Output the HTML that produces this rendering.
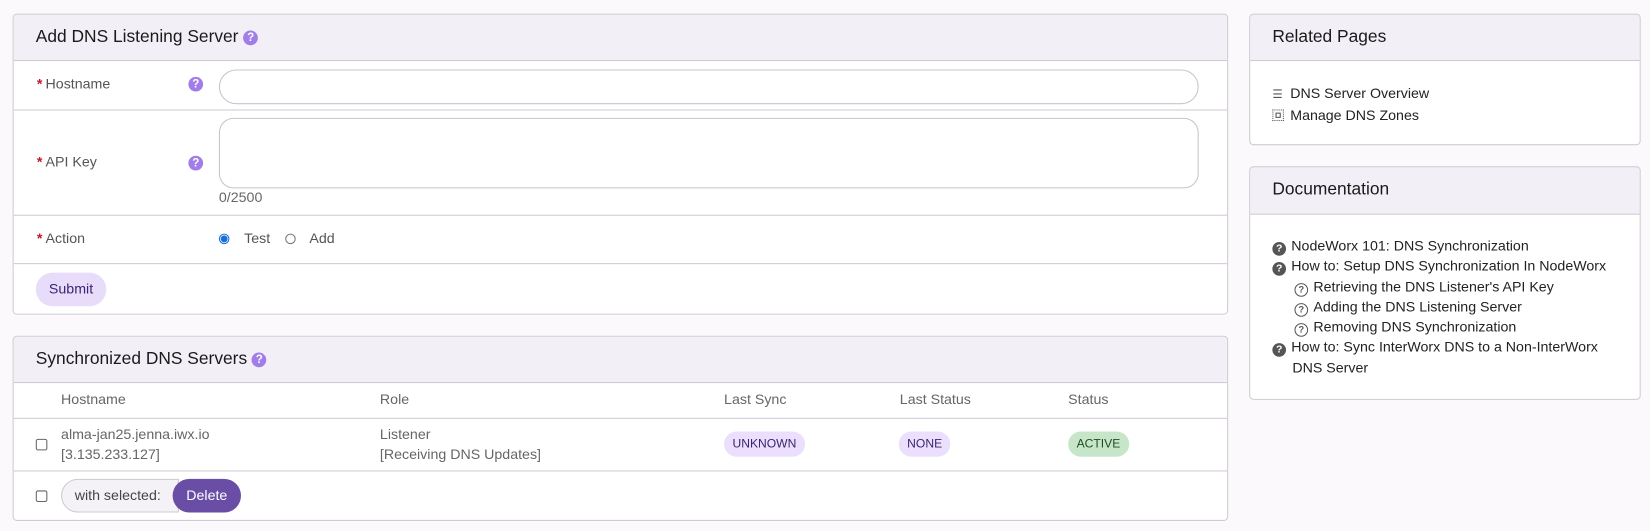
<!DOCTYPE html>
<html><head><meta charset="utf-8"><style>
*{box-sizing:border-box;margin:0;padding:0}
html,body{width:1650px;height:531px;overflow:hidden;background:#fcf9fc}
#w{width:1568px;height:505px;position:relative;transform:scale(1.0524);transform-origin:0 0;font-family:"Liberation Sans",sans-serif;font-size:13.5px;color:#222}
.p{position:absolute;background:#fff;border:1px solid #cfcbd2;border-radius:4px;overflow:hidden}
.h{position:absolute;left:0;right:0;top:0;background:#f3eff6;border-bottom:1px solid #cfcbd2;font-size:16.5px;color:#1a1a1a;padding-left:21px}
.a{position:absolute}
.line{position:absolute;left:0;right:0;height:1px;background:#cfcbd2}
.q{display:inline-block;width:14px;height:14px;border-radius:50%;background:#a07de8;color:#fff;font-size:11px;font-weight:bold;text-align:center;line-height:14px;vertical-align:1px}
.lab{color:#555}
.lab b{color:#c0182a;font-weight:bold;margin-right:3px}
.g{color:#666}
.pill{position:absolute;height:24px;border-radius:12px;font-size:11.5px;line-height:24px;padding:0 8px;color:#3b2370}
.dq{display:inline-block;width:13px;height:13px;border-radius:50%;background:#555;color:#fff;font-size:10px;font-weight:bold;text-align:center;line-height:13px;margin-right:5px;vertical-align:-1px}
.oq{display:inline-block;width:13px;height:13px;border-radius:50%;border:1.3px solid #555;color:#555;font-size:9px;font-weight:bold;text-align:center;line-height:11px;margin-right:5px;vertical-align:-1px}
.cb{position:absolute;width:11px;height:11px;border:1px solid #666;border-radius:2px;background:#fff}
</style></head><body><div id="w">

<div class="p" style="left:12px;top:13px;width:1155px;height:286px">
 <div class="h" style="height:44px;line-height:42px">Add DNS Listening Server <span class="q">?</span></div>
 <div class="line" style="top:90px"></div>
 <div class="line" style="top:190px"></div>
 <div class="line" style="top:236px"></div>
 <div class="a lab" style="left:22px;top:58px"><b>*</b>Hostname</div>
 <div class="a" style="left:166px;top:58px"><span class="q">?</span></div>
 <div class="a" style="left:195px;top:52px;width:931px;height:33px;border:1px solid #c8c4cc;border-radius:17px"></div>
 <div class="a lab" style="left:22px;top:132px"><b>*</b>API Key</div>
 <div class="a" style="left:166px;top:133px"><span class="q">?</span></div>
 <div class="a" style="left:195px;top:98px;width:931px;height:67px;border:1px solid #c8c4cc;border-radius:14px"></div>
 <div class="a g" style="left:195px;top:166px">0/2500</div>
 <div class="a lab" style="left:22px;top:205px"><b>*</b>Action</div>
 <div class="a" style="left:195px;top:208px;width:10px;height:10px;border-radius:50%;border:1px solid #1a6fd8;background:radial-gradient(#1a6fd8 0 3px,#fff 3.5px)"></div>
 <div class="a lab" style="left:219px;top:205px">Test</div>
 <div class="a" style="left:258px;top:208px;width:10px;height:10px;border-radius:50%;border:1px solid #777"></div>
 <div class="a lab" style="left:281px;top:205px">Add</div>
 <div class="a" style="left:21px;top:245px;width:67px;height:32px;border-radius:16px;background:#e8dcfb;color:#3b2370;text-align:center;line-height:32px">Submit</div>
</div>

<div class="p" style="left:12px;top:319px;width:1155px;height:176px">
 <div class="h" style="height:44px;line-height:42px">Synchronized DNS Servers <span class="q">?</span></div>
 <div class="line" style="top:77px"></div>
 <div class="line" style="top:127px"></div>
 <div class="a g" style="left:45px;top:52px">Hostname</div>
 <div class="a g" style="left:348px;top:52px">Role</div>
 <div class="a g" style="left:675px;top:52px">Last Sync</div>
 <div class="a g" style="left:842px;top:52px">Last Status</div>
 <div class="a g" style="left:1002px;top:52px">Status</div>
 <div class="cb" style="left:21px;top:97px"></div>
 <div class="a g" style="left:45px;top:83px;line-height:19px">alma-jan25.jenna.iwx.io<br>[3.135.233.127]</div>
 <div class="a g" style="left:348px;top:83px;line-height:19px">Listener<br>[Receiving DNS Updates]</div>
 <div class="pill" style="left:675px;top:90px;background:#ebdffd">UNKNOWN</div>
 <div class="pill" style="left:841px;top:90px;background:#ebdffd">NONE</div>
 <div class="pill" style="left:1002px;top:90px;background:#c7e6c9;color:#1f4d22">ACTIVE</div>
 <div class="cb" style="left:21px;top:146px"></div>
 <div class="a" style="left:45px;top:135px;width:112px;height:32px;border:1px solid #ccc;border-radius:16px 0 0 16px;background:#f5f2f7;color:#444;line-height:30px;padding-left:12px">with selected:</div>
 <div class="a" style="left:151px;top:135px;width:65px;height:32px;border-radius:16px;background:#6a4ea5;color:#fff;text-align:center;line-height:32px">Delete</div>
</div>

<div class="p" style="left:1187px;top:13px;width:372px;height:125px">
 <div class="h" style="height:44px;line-height:42px">Related Pages</div>
 <div class="a" style="left:21px;top:65px;line-height:19px;color:#222">
  <div><span style="display:inline-block;width:13px;margin-right:4px;color:#555;font-size:11px">☰</span>DNS Server Overview</div>
  <div><span style="display:inline-block;width:11px;height:11px;border:1px dotted #555;margin-right:6px;vertical-align:-1px;position:relative"><span style="position:absolute;left:2px;top:2px;width:5px;height:5px;border:1px solid #555"></span></span>Manage DNS Zones</div>
 </div>
</div>

<div class="p" style="left:1187px;top:158px;width:372px;height:222px">
 <div class="h" style="height:45px;line-height:43px">Documentation</div>
 <div class="a" style="left:21px;top:65px;line-height:19.3px;color:#222">
  <div><span class="dq">?</span>NodeWorx 101: DNS Synchronization</div>
  <div><span class="dq">?</span>How to: Setup DNS Synchronization In NodeWorx</div>
  <div style="padding-left:21px"><span class="oq">?</span>Retrieving the DNS Listener's API Key</div>
  <div style="padding-left:21px"><span class="oq">?</span>Adding the DNS Listening Server</div>
  <div style="padding-left:21px"><span class="oq">?</span>Removing DNS Synchronization</div>
  <div><span class="dq">?</span>How to: Sync InterWorx DNS to a Non-InterWorx</div>
  <div style="padding-left:19px">DNS Server</div>
 </div>
</div>
</div></body></html>
